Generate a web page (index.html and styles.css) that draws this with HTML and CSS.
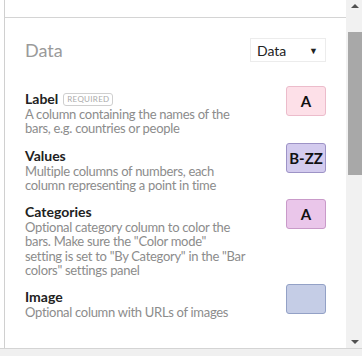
FILE: index.html
```html
<!DOCTYPE html>
<html>
<head>
<meta charset="utf-8">
<link rel="stylesheet" href="styles.css">
</head>
<body>
<div class="viewport">
  <div class="page">
    <div class="panel">
      <div class="prev-section"></div>
      <div class="section">
        <div class="section-head">
          <h2 class="section-title">Data</h2>
          <div class="select"><span>Data</span><span class="caret">▼</span></div>
        </div>
        <div class="fields">
          <div class="field">
            <div class="field-text">
              <div class="field-title">Label <span class="required">Required</span></div>
              <div class="field-desc">A column containing the names of the<br>bars, e.g. countries or people</div>
            </div>
            <div class="col-badge badge-label">A</div>
          </div>
          <div class="field">
            <div class="field-text">
              <div class="field-title">Values</div>
              <div class="field-desc">Multiple columns of numbers, each<br>column representing a point in time</div>
            </div>
            <div class="col-badge badge-values">B-ZZ</div>
          </div>
          <div class="field">
            <div class="field-text">
              <div class="field-title">Categories</div>
              <div class="field-desc">Optional category column to color the<br>bars. Make sure the "Color mode"<br>setting is set to "By Category" in the "Bar<br>colors" settings panel</div>
            </div>
            <div class="col-badge badge-cat">A</div>
          </div>
          <div class="field">
            <div class="field-text">
              <div class="field-title">Image</div>
              <div class="field-desc">Optional column with URLs of images</div>
            </div>
            <div class="col-badge badge-image"></div>
          </div>
        </div>
      </div>
    </div>
  </div>
  <div class="scrollbar">
    <div class="sb-btn"><span class="arrow-up"></span></div>
    <div class="sb-track">
      <div class="sb-thumb"></div>
    </div>
    <div class="sb-btn"><span class="arrow-down"></span></div>
  </div>
</div>
</body>
</html>
```
FILE: styles.css
```css
* { box-sizing: border-box; }
html, body { margin: 0; padding: 0; }
body {
  background: #f0f0f0;
  font-family: Lato, "Open Sans", sans-serif;
  width: 362px;
  height: 356px;
  overflow: hidden;
}
.viewport {
  display: flex;
  height: 349px;
  background: #fff;
  border-bottom: 1px solid #d4d4d4;
}
.page {
  width: 346px;
  padding-left: 4px;
}
.panel {
  height: 100%;
  border-left: 1px solid #d0d0d0;
}
.prev-section {
  height: 18px;
  border-bottom: 1px solid #d4d4d4;
}
.section {
  padding: 20px 20px 0 20px;
}
.section-head {
  display: flex;
  justify-content: space-between;
  align-items: center;
  height: 24px;
}
.section-title {
  margin: 0;
  font-weight: 400;
  font-size: 18px;
  color: #9a9a9a;
}
.select {
  width: 76px;
  height: 24px;
  border: 1px solid #ececec;
  display: flex;
  align-items: center;
  justify-content: space-between;
  padding: 0 7px 0 6px;
  font-size: 14px;
  color: #222;
}
.caret { font-size: 9px; }
.fields {
  margin-top: 29px;
  display: flex;
  flex-direction: column;
  gap: 12px;
}
.field {
  display: flex;
  justify-content: space-between;
  align-items: flex-start;
}
.field-text { width: 240px; }
.field-title {
  font-weight: 700;
  font-size: 14px;
  line-height: 16px;
  color: #222;
  display: flex;
  align-items: center;
  gap: 5px;
}
.required {
  font-weight: 400;
  font-size: 8px;
  letter-spacing: 0.3px;
  text-transform: uppercase;
  color: #aaa;
  border: 1px solid #cfcfcf;
  border-radius: 3px;
  padding: 1px 3px;
  line-height: 9px;
}
.field-desc {
  font-size: 13px;
  letter-spacing: -0.3px;
  line-height: 14.3px;
  color: #8c8c8c;
  white-space: nowrap;
}
.col-badge {
  width: 40px;
  height: 30px;
  border: 1px solid;
  border-radius: 3px;
  display: flex;
  align-items: center;
  justify-content: center;
  font-weight: 700;
  font-size: 15px;
  color: #111;
  margin-top: -5px;
}
.badge-label { background: #fde0e8; border-color: #ecbccb; }
.badge-values { background: #d3cbee; border-color: #9d93c6; }
.badge-cat { background: #eac6ea; border-color: #c99ac9; }
.badge-image { background: #c5cde6; border-color: #93a1c6; }
.scrollbar {
  width: 16px;
  display: flex;
  flex-direction: column;
  background: #f1f1f1;
  border-left: 2px solid #f1f1f1;
}
.sb-btn {
  height: 12px;
  display: flex;
  align-items: center;
  justify-content: center;
}
.arrow-up {
  width: 0; height: 0;
  border-left: 4px solid transparent;
  border-right: 4px solid transparent;
  border-bottom: 4px solid #505050;
}
.arrow-down {
  width: 0; height: 0;
  border-left: 4px solid transparent;
  border-right: 4px solid transparent;
  border-top: 4px solid #505050;
}
.sb-track {
  flex: 1;
  padding-top: 20px;
}
.sb-thumb {
  height: 143px;
  background: #a8a8a8;
}
```
